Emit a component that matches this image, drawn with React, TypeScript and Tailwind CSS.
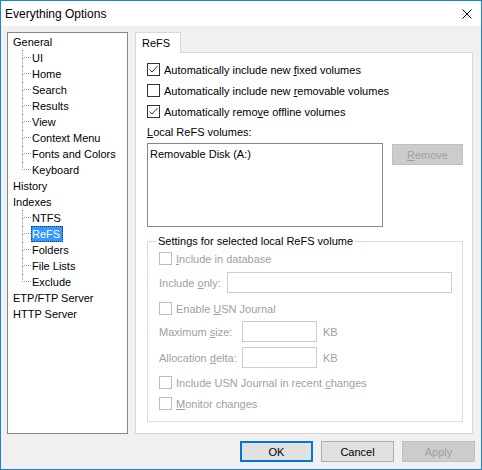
import React from "react";

const FONT = "font-['Segoe_UI','Liberation_Sans',Arial,sans-serif]";

function Check({ checked = false, disabled = false }: { checked?: boolean; disabled?: boolean }) {
  return (
    <div
      className={
        "w-[13px] h-[13px] shrink-0 border bg-white flex items-center justify-center " +
        (disabled ? "border-[#bcbcbc]" : "border-[#333333]")
      }
    >
      {checked && (
        <svg width="11" height="11" viewBox="0 0 11 11">
          <polyline points="1.5,5.5 4,8 9.5,2" fill="none" stroke="#333333" strokeWidth="1" />
        </svg>
      )}
    </div>
  );
}

function CheckRow({
  children,
  checked,
  disabled,
}: {
  children: React.ReactNode;
  checked?: boolean;
  disabled?: boolean;
}) {
  return (
    <div className="h-[21px] flex items-center">
      <Check checked={checked} disabled={disabled} />
      <span className={"ml-[4px] leading-[14px] whitespace-nowrap " + (disabled ? "text-[#a0a0a0]" : "text-black")}>
        {children}
      </span>
    </div>
  );
}

type Node = { label: string; children?: string[] };

const tree: Node[] = [
  { label: "General", children: ["UI", "Home", "Search", "Results", "View", "Context Menu", "Fonts and Colors", "Keyboard"] },
  { label: "History" },
  { label: "Indexes", children: ["NTFS", "ReFS", "Folders", "File Lists", "Exclude"] },
  { label: "ETP/FTP Server" },
  { label: "HTTP Server" },
];

function Tree() {
  return (
    <div className="w-[121px] h-[402px] border border-[#828790] bg-white pt-[1px] shrink-0">
      {tree.map((n) => (
        <div key={n.label}>
          <div className="h-[16px] leading-[16px] pl-[5px] whitespace-nowrap">{n.label}</div>
          {n.children?.map((c, i) => {
            const last = i === (n.children?.length ?? 0) - 1;
            const sel = c === "ReFS";
            return (
              <div key={c} className="h-[16px] flex">
                <div className="w-[14px] shrink-0" />
                <div className="w-[9px] shrink-0 flex flex-col">
                  <div className="h-[8px] border-l border-b border-dotted border-[#a0a0a0]" />
                  <div className={"h-[8px] " + (last ? "" : "border-l border-dotted border-[#a0a0a0]")} />
                </div>
                <div
                  className={
                    "h-[16px] leading-[14px] pr-[2px] border whitespace-nowrap " +
                    (sel ? "bg-[#3399ff] text-white border-dotted border-[#1a3a60]" : "border-transparent")
                  }
                >
                  {c}
                </div>
              </div>
            );
          })}
        </div>
      ))}
    </div>
  );
}

function Button({
  children,
  primary,
  disabled,
  w = "w-[73px]",
}: {
  children: React.ReactNode;
  primary?: boolean;
  disabled?: boolean;
  w?: string;
}) {
  return (
    <div
      className={
        w +
        " h-[21px] flex items-center justify-center leading-[14px] " +
        (primary
          ? "border-2 border-[#0078d7] bg-[#e1e1e1] text-black"
          : disabled
          ? "border border-[#bfbfbf] bg-[#cccccc] text-[#a0a0a0]"
          : "border border-[#adadad] bg-[#e1e1e1] text-black")
      }
    >
      {children}
    </div>
  );
}

function Input({ w }: { w: string }) {
  return <div className={w + " h-[21px] border border-[#cccccc] bg-white shrink-0"} />;
}

export default function App() {
  return (
    <div className={"w-[482px] h-[470px] border border-[#1883d7] bg-[#f0f0f0] flex flex-col text-[11px] text-black " + FONT}>
      {/* Title bar */}
      <div className="h-[25px] bg-white flex items-center justify-between shrink-0">
        <span className="pl-[4px] leading-[16px] text-[12px]">Everything Options</span>
        <svg width="10" height="10" viewBox="0 0 10 10" className="mr-[9px]">
          <path d="M0.5 0.5 L9.5 9.5 M9.5 0.5 L0.5 9.5" stroke="#000" strokeWidth="1" />
        </svg>
      </div>

      {/* Body */}
      <div className="flex pt-[6px] pl-[6px] shrink-0">
        <Tree />
        <div className="ml-[7px] w-[338px] flex flex-col">
          <div className="h-[21px] flex">
            <div className="w-[46px] h-[21px] border-l border-t border-r border-[#d9d9d9] bg-white pl-[6px] pt-[3px] leading-[14px]">
              ReFS
            </div>
            <div className="flex-1 border-b border-[#d9d9d9]" />
          </div>
          <div className="h-[381px] border-l border-r border-b border-[#d9d9d9] bg-white pl-[11px] pt-[6px]">
            <CheckRow checked>
              Automatically include new <u>f</u>ixed volumes
            </CheckRow>
            <CheckRow>
              Automatically include new <u>r</u>emovable volumes
            </CheckRow>
            <CheckRow checked>
              Automatically remo<u>v</u>e offline volumes
            </CheckRow>
            <div className="h-[19px] flex items-center leading-[14px]">
              <span>
                <u>L</u>ocal ReFS volumes:
              </span>
            </div>
            <div className="mt-[2px] flex items-start">
              <div className="w-[236px] h-[84px] border border-[#828790] bg-white pl-[2px] pt-[2px] leading-[16px]">
                Removable Disk (A:)
              </div>
              <div className="ml-[9px] mt-[1px]">
                <Button disabled w="w-[71px]">
                  <span>
                    <u>R</u>emove
                  </span>
                </Button>
              </div>
            </div>

            <fieldset className="mt-[7px] w-[316px] h-[188px] border border-[#dcdcdc] pl-[11px] pb-[4px]">
              <legend className="ml-[-3px] px-[2px] leading-[14px]">Settings for selected local ReFS volume</legend>
              <CheckRow disabled>
                <u>I</u>nclude in database
              </CheckRow>
              <div className="mt-[3px] h-[21px] flex items-center text-[#a0a0a0]">
                <span className="w-[68px] leading-[14px] whitespace-nowrap">
                  Include <u>o</u>nly:
                </span>
                <Input w="w-[225px]" />
              </div>
              <div className="mt-[5px]">
                <CheckRow disabled>
                  Enable <u>U</u>SN Journal
                </CheckRow>
              </div>
              <div className="mt-[2px] h-[21px] flex items-center text-[#a0a0a0]">
                <span className="w-[83px] leading-[14px] whitespace-nowrap">
                  Maximum <u>s</u>ize:
                </span>
                <Input w="w-[75px]" />
                <span className="ml-[6px] leading-[14px]">KB</span>
              </div>
              <div className="mt-[5px] h-[21px] flex items-center text-[#a0a0a0]">
                <span className="w-[83px] leading-[14px] whitespace-nowrap">
                  Allocation <u>d</u>elta:
                </span>
                <Input w="w-[75px]" />
                <span className="ml-[6px] leading-[14px]">KB</span>
              </div>
              <div className="mt-[4px]">
                <CheckRow disabled>
                  Include USN Journal in recent <u>c</u>hanges
                </CheckRow>
              </div>
              <CheckRow disabled>
                <u>M</u>onitor changes
              </CheckRow>
            </fieldset>
          </div>
        </div>
      </div>

      {/* Buttons */}
      <div className="mt-[7px] flex justify-end gap-[8px] pr-[6px]">
        <Button primary>OK</Button>
        <Button>Cancel</Button>
        <Button disabled>Apply</Button>
      </div>
    </div>
  );
}
